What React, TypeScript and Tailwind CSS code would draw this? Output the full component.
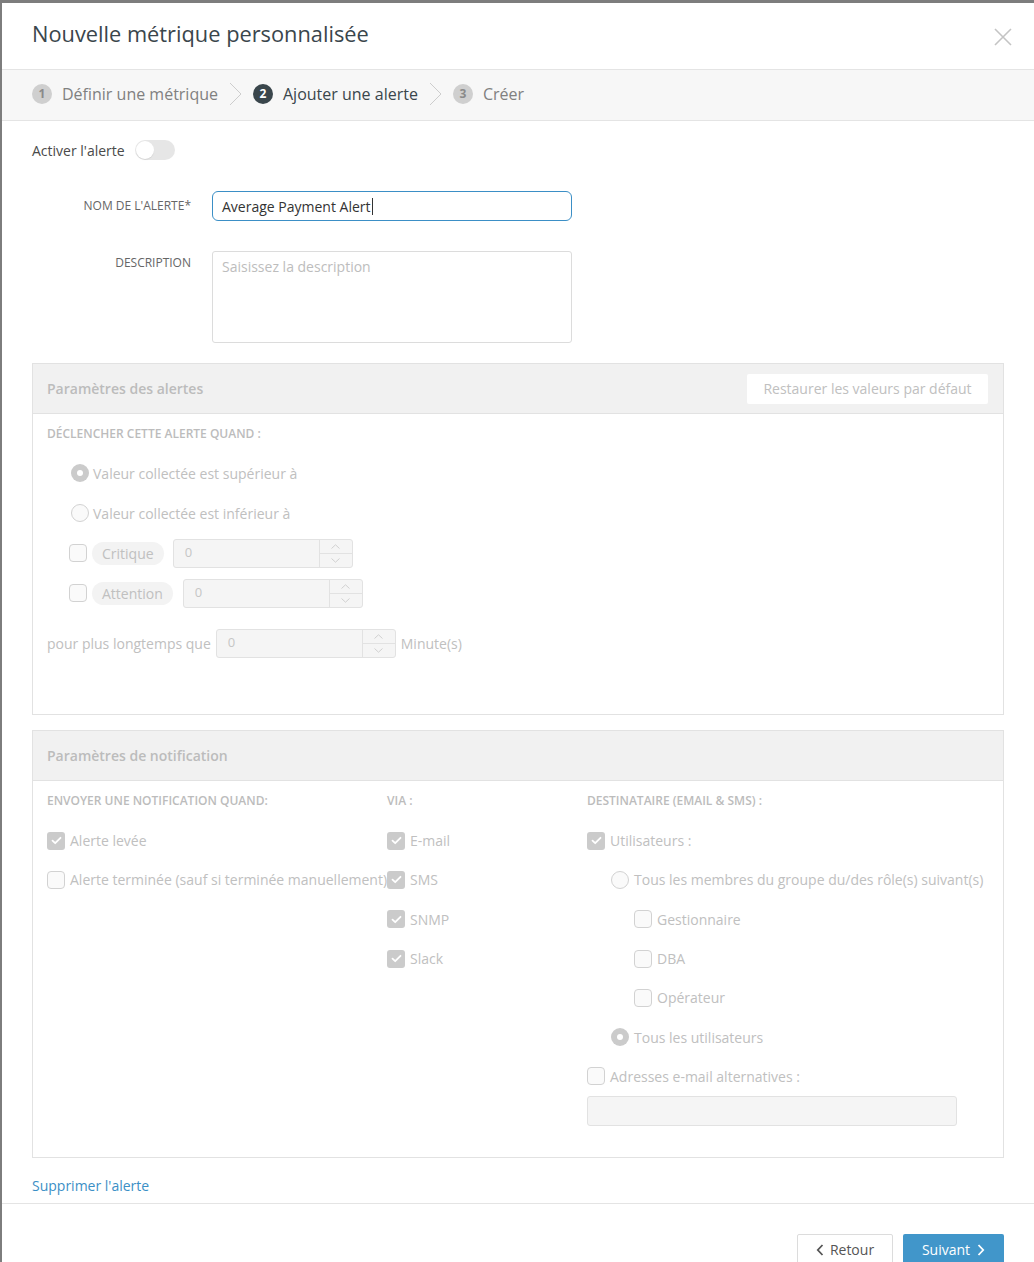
import React from "react";

const FONT = { fontFamily: '"Open Sans", "Noto Sans", Arial, sans-serif' };

function Check({ checked, className = "" }: { checked?: boolean; className?: string }) {
  return checked ? (
    <span className={`flex h-[18px] w-[18px] shrink-0 items-center justify-center rounded-[3px] bg-[#cbcbcb] ${className}`}>
      <svg width="11" height="9" viewBox="0 0 11 9" fill="none">
        <path d="M1.5 4.6 L4.2 7.2 L9.5 1.8" stroke="#fff" strokeWidth="1.8" strokeLinecap="round" strokeLinejoin="round" />
      </svg>
    </span>
  ) : (
    <span className={`block h-[18px] w-[18px] shrink-0 rounded-[4px] border border-[#d2d2d2] bg-[#fafafa] ${className}`} />
  );
}

function Radio({ checked }: { checked?: boolean }) {
  return checked ? (
    <span className="flex h-[18px] w-[18px] shrink-0 items-center justify-center rounded-full bg-[#cbcbcb]">
      <span className="block h-[6px] w-[6px] rounded-full bg-white" />
    </span>
  ) : (
    <span className="block h-[18px] w-[18px] shrink-0 rounded-full border border-[#d2d2d2] bg-[#fafafa]" />
  );
}

function NumInput() {
  return (
    <div className="flex h-[29px] w-[180px] rounded-[3px] border border-[#e2e2e2] bg-[#f5f5f5]">
      <div className="flex flex-1 items-center pl-[11px] text-[13px] text-[#c6c6c6]">0</div>
      <div className="flex w-[33px] flex-col border-l border-[#e2e2e2]">
        <div className="flex flex-1 items-center justify-center border-b border-[#e2e2e2]">
          <svg width="9" height="5" viewBox="0 0 9 5" fill="none">
            <path d="M0.5 4.5 L4.5 0.8 L8.5 4.5" stroke="#d0d0d0" strokeWidth="1" />
          </svg>
        </div>
        <div className="flex flex-1 items-center justify-center">
          <svg width="9" height="5" viewBox="0 0 9 5" fill="none">
            <path d="M0.5 0.5 L4.5 4.2 L8.5 0.5" stroke="#d0d0d0" strokeWidth="1" />
          </svg>
        </div>
      </div>
    </div>
  );
}

function StepChevron() {
  return (
    <svg width="13" height="24" viewBox="0 0 13 24" fill="none" className="mx-[11px]">
      <path d="M1 1 L12 12 L1 23" stroke="#cdcdcd" strokeWidth="1" />
    </svg>
  );
}

function Step({ n, label, active }: { n: number; label: string; active?: boolean }) {
  return (
    <div className="flex items-center">
      <span
        className={`flex h-[20px] w-[20px] items-center justify-center rounded-full text-[12px] font-bold ${
          active ? "bg-[#3a464c] text-white" : "bg-[#cfcfcf] text-[#8a8a8a]"
        }`}
      >
        {n}
      </span>
      <span className={`ml-[10px] text-[16px] ${active ? "text-[#3a464c]" : "text-[#808080]"}`}>{label}</span>
    </div>
  );
}

function Row({ children, className = "" }: { children: React.ReactNode; className?: string }) {
  return <div className={`flex h-[39.3px] items-center gap-[5px] text-[14px] text-[#c0c0c0] ${className}`}>{children}</div>;
}

export default function App() {
  return (
    <div className="min-h-screen bg-[#7d7d7d] pl-[2px] pt-[3px]" style={FONT}>
      <div className="bg-white">
        {/* Header */}
        <div className="flex h-[67px] items-center justify-between border-b border-[#e4e4e4] pl-[30px] pr-[22px]">
          <h1 className="mb-[3px] text-[21.8px] font-normal text-[#3a464c]">Nouvelle métrique personnalisée</h1>
          <svg width="18" height="18" viewBox="0 0 18 18" fill="none" className="mt-[2px]">
            <path d="M1 1 L17 17 M17 1 L1 17" stroke="#c4c4c4" strokeWidth="1.6" />
          </svg>
        </div>

        {/* Stepper */}
        <div className="flex h-[51px] items-center border-b border-[#e4e4e4] bg-[#f7f7f7] pb-[2px] pl-[30px]">
          <Step n={1} label="Définir une métrique" />
          <StepChevron />
          <Step n={2} label="Ajouter une alerte" active />
          <StepChevron />
          <Step n={3} label="Créer" />
        </div>

        {/* Body */}
        <div className="px-[30px] pt-[19px]">
          <div className="flex h-[20px] items-center">
            <span className="text-[14px] text-[#4a4a4a]">Activer l'alerte</span>
            <span className="ml-[10px] flex h-[20px] w-[40px] items-center rounded-full bg-[#e6e6e6] pl-[1px]">
              <span className="block h-[18px] w-[18px] rounded-full bg-white shadow-[0_1px_1px_rgba(0,0,0,0.08)]" />
            </span>
          </div>

          <div className="mt-[31px] flex items-center">
            <label className="w-[159px] text-right text-[12px] text-[#666]">NOM DE L'ALERTE*</label>
            <div className="ml-[21px] flex h-[30px] w-[360px] items-center rounded-[6px] border border-[#3b8fc6] pl-[9px] text-[14px] text-[#333]">
              Average Payment Alert<span className="ml-[1px] inline-block h-[17px] w-px bg-[#333]" />
            </div>
          </div>

          <div className="mt-[30px] flex items-start">
            <label className="w-[159px] pt-[3px] text-right text-[12px] text-[#666]">DESCRIPTION</label>
            <div className="ml-[21px] h-[92px] w-[360px] rounded-[3px] border border-[#dcdcdc] pl-[9px] pt-[4px] text-[14px] text-[#bdbdbd]">
              Saisissez la description
            </div>
          </div>

          {/* Alert params panel */}
          <div className="mt-[20px] border border-[#e2e2e2]">
            <div className="flex h-[50px] items-center justify-between border-b border-[#e2e2e2] bg-[#f1f1f1] pl-[14px] pr-[15px]">
              <span className="text-[14px] font-semibold text-[#bcbcbc]">Paramètres des alertes</span>
              <span className="flex h-[30px] w-[241px] items-center justify-center rounded-[2px] bg-white text-[14px] text-[#c0c0c0]">
                Restaurer les valeurs par défaut
              </span>
            </div>
            <div className="px-[14px] pb-[51px] pt-[12px]">
              <div className="text-[12px] font-semibold leading-[16px] text-[#bcbcbc]">DÉCLENCHER CETTE ALERTE QUAND :</div>
              <div className="mt-[11px] flex h-[40px] items-center gap-[4px] pl-[24px] text-[14px] text-[#c0c0c0]">
                <Radio checked />
                <span>Valeur collectée est supérieur à</span>
              </div>
              <div className="flex h-[40px] items-center gap-[4px] pl-[24px] text-[14px] text-[#c0c0c0]">
                <Radio />
                <span>Valeur collectée est inférieur à</span>
              </div>
              <div className="flex h-[40px] items-center pl-[22px] text-[14px] text-[#c0c0c0]">
                <Check />
                <span className="ml-[5px] flex h-[23px] items-center rounded-full bg-[#f3f3f3] px-[10px]">Critique</span>
                <span className="ml-[9px]"><NumInput /></span>
              </div>
              <div className="flex h-[40px] items-center pl-[22px] text-[14px] text-[#c0c0c0]">
                <Check />
                <span className="ml-[5px] flex h-[23px] items-center rounded-full bg-[#f3f3f3] px-[10px]">Attention</span>
                <span className="ml-[10px]"><NumInput /></span>
              </div>
              <div className="mt-[10px] flex h-[40px] items-center gap-[5px] text-[14px] text-[#c0c0c0]">
                <span>pour plus longtemps que</span>
                <NumInput />
                <span>Minute(s)</span>
              </div>
            </div>
          </div>

          {/* Notification panel */}
          <div className="mt-[15px] border border-[#e2e2e2]">
            <div className="flex h-[50px] items-center border-b border-[#e2e2e2] bg-[#f1f1f1] pl-[14px]">
              <span className="text-[14px] font-semibold text-[#bcbcbc]">Paramètres de notification</span>
            </div>
            <div className="grid grid-cols-[340px_200px_1fr] px-[14px] pb-[31px] pt-[12px]">
              <div>
                <div className="text-[12px] font-semibold leading-[16px] text-[#bcbcbc]">ENVOYER UNE NOTIFICATION QUAND:</div>
                <div className="mt-[12px]">
                  <Row><Check checked /><span>Alerte levée</span></Row>
                  <Row className="whitespace-nowrap"><Check /><span>Alerte terminée (sauf si terminée manuellement)</span></Row>
                </div>
              </div>
              <div>
                <div className="text-[12px] font-semibold leading-[16px] text-[#bcbcbc]">VIA :</div>
                <div className="mt-[12px]">
                  <Row><Check checked /><span>E-mail</span></Row>
                  <Row><Check checked /><span>SMS</span></Row>
                  <Row><Check checked /><span>SNMP</span></Row>
                  <Row><Check checked /><span>Slack</span></Row>
                </div>
              </div>
              <div>
                <div className="text-[12px] font-semibold leading-[16px] text-[#bcbcbc]">DESTINATAIRE (EMAIL &amp; SMS) :</div>
                <div className="mt-[12px]">
                  <Row><Check checked /><span>Utilisateurs :</span></Row>
                  <Row className="pl-[24px]"><Radio /><span>Tous les membres du groupe du/des rôle(s) suivant(s)</span></Row>
                  <Row className="pl-[47px]"><Check /><span>Gestionnaire</span></Row>
                  <Row className="pl-[47px]"><Check /><span>DBA</span></Row>
                  <Row className="pl-[47px]"><Check /><span>Opérateur</span></Row>
                  <Row className="pl-[24px]"><Radio checked /><span>Tous les utilisateurs</span></Row>
                  <Row><Check /><span>Adresses e-mail alternatives :</span></Row>
                  <div className="h-[30px] w-[370px] rounded-[3px] border border-[#e2e2e2] bg-[#f5f5f5]" />
                </div>
              </div>
            </div>
          </div>

          <div className="pb-[7px] pt-[18px] text-[14px] leading-[20px] text-[#3b8fc6]">Supprimer l'alerte</div>
        </div>

        {/* Footer */}
        <div className="flex justify-end gap-[10px] border-t border-[#e4e4e4] px-[30px] pb-[30px] pt-[30px]">
          <button className="flex h-[31px] w-[96px] items-center justify-center gap-[6px] rounded-[2px] border border-[#dcdcdc] bg-white text-[14px] text-[#555]">
            <svg width="8" height="12" viewBox="0 0 8 12" fill="none">
              <path d="M6.5 1 L1.8 6 L6.5 11" stroke="#555" strokeWidth="1.8" />
            </svg>
            Retour
          </button>
          <button className="flex h-[31px] w-[101px] items-center justify-center gap-[7px] rounded-[2px] bg-[#4196ca] text-[14px] text-white">
            Suivant
            <svg width="8" height="12" viewBox="0 0 8 12" fill="none">
              <path d="M1.5 1 L6.2 6 L1.5 11" stroke="#fff" strokeWidth="1.8" />
            </svg>
          </button>
        </div>
      </div>
    </div>
  );
}
